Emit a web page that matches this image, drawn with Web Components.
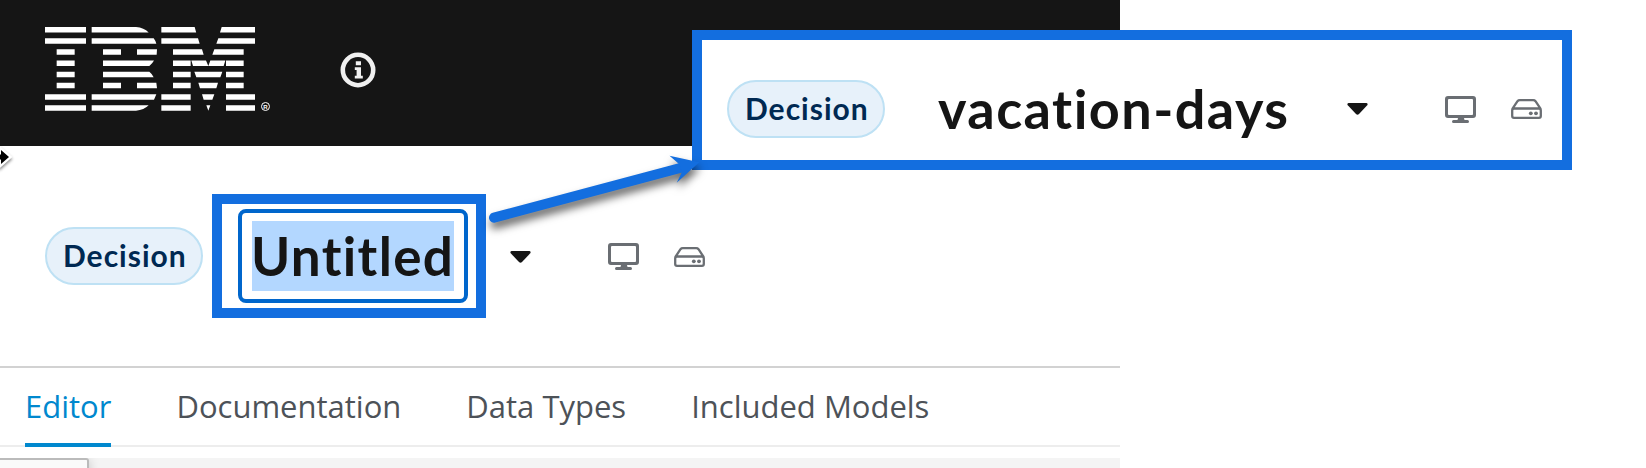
<!DOCTYPE html>
<html lang="en">
<head>
<meta charset="utf-8">
<title>Decision editor</title>
<style>
html,body{margin:0;background:#fff;overflow:hidden}
body{width:1646px;height:468px;font-family:Lato,"Open Sans",sans-serif;color:#151515;--badge-ls:1px;--t1-ls:1.35px;--t2-ls:1.45px}
</style>
</head>
<body>
<decision-app></decision-app>
<script>
function define(name, html) {
  const t = document.createElement('template');
  t.innerHTML = html;
  customElements.define(name, class extends HTMLElement {
    constructor() {
      super();
      this.attachShadow({mode: 'open'}).appendChild(t.content.cloneNode(true));
    }
  });
}

define('ibm-logo', `
<style>:host{display:block;width:260px;height:120px}svg{display:block}</style>
<svg width="260" height="120" viewBox="0 0 780 360" fill="#fff">
<path d="M45 51H168V67.5H45zM185 51H318Q342 53 356 67.5H185zM394 51H494L498.500 67.500H394zM575 51H675V67.500H570z"/>
<path d="M45 84.500H168V101H45zM185 84.500H371Q377 92 379 101H185zM394 84.500H504L509 101H394zM565 84.500H675V101H559z"/>
<path d="M80 118H134V134.500H80zM219 118H273V134.500H219zM321 118H381L380 134.500H321zM429 118H516L521 134.500H429zM553 118H641V134.500H547z"/>
<path d="M80 151.500H134V168H80zM219 151.500H372Q367 161 358 168H219zM429 151.500H482V168H429zM484 151.500H528L535 168L541 151.500H586L581 168H489zM588 151.500H641V168H588z"/>
<path d="M80 185H134V201.500H80zM219 185H358Q367 192 371 201.500H219zM429 185H482V201.500H429zM493 185H577L571 201.500H499zM588 185H641V201.500H588z"/>
<path d="M80 218.500H134V235H80zM219 218.500H273V235H219zM321 218.500H379L381 235H321zM429 218.500H482V235H429zM505 218.500H564L559 235H510zM588 218.500H641V235H588z"/>
<path d="M45 252.500H168V269H45zM185 252.500H379L372 269H185zM394 252.500H482V269H394zM516 252.500H553L547 269H521zM588 252.500H675V269H588z"/>
<path d="M45 286H168V302.500H45zM185 286H356Q342 300 318 302.500H185zM394 286H482V302.500H394zM529 286H541L535 302.500zM588 286H675V302.500H588z"/>
<circle cx="706.500" cy="289.500" r="12" fill="none" stroke="#fff" stroke-width="3"/>
<text x="706.500" y="296" text-anchor="middle" font-family="Liberation Sans" font-weight="700" font-size="18">R</text>
</svg>`);

define('info-icon', `
<style>:host{display:block;width:36px;height:36px}svg{display:block}</style>
<svg width="36" height="36" fill="#f0f0f0"><circle cx="18" cy="18" r="15.200" fill="none" stroke="#f0f0f0" stroke-width="4.600"/>
<path d="M15.800 9.300h5.200v3.900h-5.200zM14.800 15.200h6.200v8.500h1.800v2.900h-8v-2.900h1.800v-5.600h-1.800z"/></svg>`);

define('app-masthead', `
<style>:host{display:flex;box-sizing:border-box;height:146px;padding:10px 30px;background:#151515;align-items:flex-start}
info-icon{margin:41.500px 0 0 50.300px}</style>
<ibm-logo></ibm-logo><info-icon></info-icon>`);

define('kind-badge', `
<style>:host{display:block;box-sizing:border-box;width:158px;height:58px;border:2px solid #bee1f4;border-radius:29px;background:#e7f1fa;color:#002952;
font:700 30px/52px Lato,sans-serif;padding-left:16px;white-space:nowrap;font-variant-ligatures:none;letter-spacing:var(--badge-ls,0)}</style><slot></slot>`);

define('status-icons', `
<style>:host{display:flex;align-items:center;height:58px}svg{display:block}.c{margin-right:77px}.m{margin-right:35px}</style>
<svg class="c" width="21" height="12" viewBox="0 0 21 12"><path fill="#151515" d="M1.500 0H19.500Q21.500 .8 20 2.600L12 11Q10.500 12.500 9 11L1 2.600Q-.5 .8 1.500 0z"/></svg>
<svg class="m" width="31" height="27" viewBox="0 0 31 27" fill="#6a6e73"><path fill-rule="evenodd" d="M3 0H28Q31 0 31 3V19Q31 22 28 22H19L19.500 24H22.500Q24 24 24 25.500T22.500 27H8.500Q7 27 7 25.500T8.500 24H12.500L13 22H3Q0 22 0 19V3Q0 0 3 0zM3 4V18.200Q3 19 4 19H27Q28 19 28 18.200V4Q28 3 27 3H4Q3 3 3 4z"/></svg>
<svg width="31" height="20" viewBox="0 0 31 20" fill="none" stroke="#6a6e73" stroke-width="2.300"><path d="M1.200 10.200L6.500 2.200Q7.300 1.200 8.800 1.200H22.200Q23.700 1.200 24.500 2.200L29.800 10.200M3 9.500H28Q29.800 9.500 29.800 11.500V17Q29.800 18.800 28 18.800H3Q1.200 18.800 1.200 17V11.500Q1.200 9.500 3 9.500z"/><g fill="#6a6e73" stroke="none"><circle cx="19.800" cy="14.300" r="1.900"/><circle cx="25" cy="14.300" r="1.900"/></g></svg>`);

define('title-field', `
<style>:host{display:block;box-sizing:border-box;width:274px;height:124px;border:10px solid #136edf;padding:5px 8px 5px 16px}
div{box-sizing:border-box;width:230px;height:94px;border:4px solid #06c;border-radius:8px;padding:8px 10px}
span{display:block;width:202px;height:70px;background:#b3d7ff;font:700 53px/70px Lato,sans-serif;font-variant-ligatures:none;letter-spacing:var(--t1-ls,0);white-space:nowrap;text-indent:-1px}</style>
<div><span><slot></slot></span></div>`);

define('title-row', `
<style>:host{display:flex;box-sizing:border-box;height:222px;padding:48px 0 0 45px;align-items:flex-start;border-bottom:2px solid #d2d2d2}
kind-badge{margin:33px 9px 0 0}status-icons{margin:34px 0 0 24px;height:57px}</style>
<kind-badge>Decision</kind-badge><title-field>Untitled</title-field><status-icons></status-icons>`);

define('editor-tab', `
<style>:host{display:block;box-sizing:border-box;height:79px;padding-top:14px;font:400 31px/48px "Open Sans",sans-serif;color:#4d5258;white-space:nowrap;border-bottom:4px solid transparent}
:host([active]){color:#0088ce;border-color:#0088ce}</style><slot></slot>`);

define('editor-tabs', `
<style>:host{display:flex;box-sizing:border-box;height:79px;padding-left:25px;gap:65px;background:linear-gradient(#ededed,#ededed) 0 77px/100% 2px no-repeat}</style>
<editor-tab active>Editor</editor-tab><editor-tab>Documentation</editor-tab><editor-tab>Data Types</editor-tab><editor-tab>Included Models</editor-tab>`);

define('editor-canvas', `
<style>:host{display:block;margin-top:11px;height:10px;background:#f4f4f4;overflow:hidden}
div{box-sizing:border-box;width:89px;height:30px;background:#fafafa;border:2px solid #bbb;border-left:0;border-radius:0 3px 0 0;box-shadow:0 2px 12px rgba(0,0,0,.2)}</style><div></div>`);

define('rename-callout', `
<style>:host{display:flex;box-sizing:border-box;width:880px;height:140px;border:10px solid #136edf;background:#fff;padding:40px 0 0 25px}
.t{width:409px;margin-left:53px;font:700 54px/58px Lato,sans-serif;font-variant-ligatures:none;letter-spacing:var(--t2-ls,0);white-space:nowrap}
status-icons{height:58px}</style>
<kind-badge>Decision</kind-badge><div class="t"><slot></slot></div><status-icons></status-icons>`);

define('callout-arrow', `
<style>:host{display:block;pointer-events:none}svg{display:block;overflow:visible}</style>
<svg width="740" height="200"><g style="filter:drop-shadow(1px 6px 4px rgba(0,0,0,.6))"><path d="M494 217.700L682 167.500" stroke="#136edf" stroke-width="10" stroke-linecap="round"/><path fill="#136edf" d="M699.300 162.300L669.500 155.700L679 164L682 172L676.700 182.700z"/></g></svg>`);

define('resize-cursor', `
<style>:host{display:block}svg{display:block;overflow:visible;filter:drop-shadow(0 2px 1.500px rgba(0,0,0,.45))}</style>
<svg width="14" height="26"><path d="M-4 9.500H1V5L9 12L1 19V14.500H-4z" fill="#000" stroke="#fff" stroke-width="4.500" paint-order="stroke"/></svg>`);

define('decision-app', `
<style>:host{display:block;position:relative;width:1646px;height:468px;overflow:hidden}
main{width:1120px}
rename-callout{position:absolute;left:692px;top:30px}
callout-arrow{position:absolute;left:0;top:0}
resize-cursor{position:absolute;left:0;top:145px}</style>
<main><app-masthead></app-masthead><title-row></title-row><editor-tabs></editor-tabs><editor-canvas></editor-canvas></main>
<rename-callout>vacation-days</rename-callout><callout-arrow></callout-arrow><resize-cursor></resize-cursor>`);
</script>
</body>
</html>
